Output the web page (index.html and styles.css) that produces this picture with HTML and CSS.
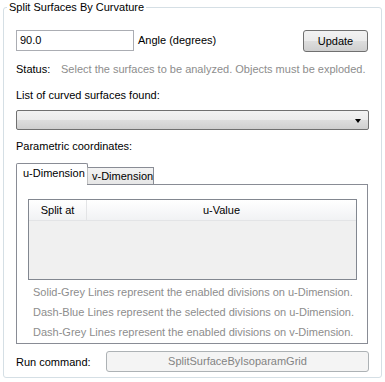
FILE: index.html
```html
<!DOCTYPE html>
<html>
<head>
<meta charset="utf-8">
<link rel="stylesheet" href="styles.css">
</head>
<body>
<fieldset class="group">
  <legend class="group-title">Split Surfaces By Curvature</legend>
  <div class="group-body">
    <div class="angle-row">
      <div class="text-input">90.0</div>
      <span class="angle-label">Angle (degrees)</span>
      <div class="btn update-btn">Update</div>
    </div>
    <div class="status-row">
      <span class="status-label">Status:</span>
      <span class="muted">Select the surfaces to be analyzed. Objects must be exploded.</span>
    </div>
    <div class="label-row list-label">List of curved surfaces found:</div>
    <div class="combo"><span class="combo-arrow"></span></div>
    <div class="label-row param-label">Parametric coordinates:</div>
    <div class="tabs">
      <div class="tab-strip">
        <div class="tab tab-active">u-Dimension</div>
        <div class="tab tab-inactive">v-Dimension</div>
      </div>
      <div class="tab-panel">
        <div class="grid">
          <div class="grid-head">
            <div class="col-split">Split at</div>
            <div class="col-value">u-Value</div>
          </div>
          <div class="grid-body"></div>
        </div>
        <div class="notes">
          <div class="note">Solid-Grey Lines represent the enabled divisions on u-Dimension.</div>
          <div class="note">Dash-Blue Lines represent the selected divisions on u-Dimension.</div>
          <div class="note">Dash-Grey Lines represent the enabled divisions on v-Dimension.</div>
        </div>
      </div>
    </div>
    <div class="run-row">
      <span class="run-label">Run command:</span>
      <div class="run-btn">SplitSurfaceByIsoparamGrid</div>
    </div>
  </div>
</fieldset>
</body>
</html>
```

FILE: styles.css
```css
* { box-sizing: border-box; }
html, body {
  margin: 0;
  padding: 0;
  background: #ffffff;
}
body {
  width: 385px;
  height: 382px;
  overflow: hidden;
  font-family: "Liberation Sans", Arial, sans-serif;
  font-size: 11px;
  color: #000000;
}
.group {
  margin: 0 3px;
  padding: 0;
  border: 1px solid #d5dfe5;
  border-radius: 3px;
  min-width: 0;
}
.group-title {
  margin-left: 3px;
  padding: 0 2px;
  height: 14px;
  line-height: 14px;
  font-size: 11px;
}
.group-body {
  padding: 16px 12px 5px 12px;
  display: flex;
  flex-direction: column;
}
.angle-row {
  display: flex;
  align-items: flex-start;
  height: 22px;
}
.text-input {
  width: 118px;
  height: 21px;
  border: 1px solid #abadb3;
  padding: 0 0 0 3px;
  line-height: 19px;
  background: #fff;
}
.angle-label {
  margin-left: 4px;
  line-height: 21px;
}
.btn {
  border: 1px solid #707070;
  border-radius: 3px;
  background: linear-gradient(#f2f2f2 0%, #ebebeb 50%, #dddddd 51%, #cfcfcf 100%);
  text-align: center;
}
.update-btn {
  margin-left: auto;
  margin-right: 1px;
  width: 65px;
  height: 22px;
  line-height: 20px;
}
.status-row {
  margin-top: 10px;
  height: 14px;
  line-height: 14px;
  display: flex;
  white-space: nowrap;
}
.status-label {
  width: 45px;
}
.muted {
  color: #8d8d8d;
}
.label-row {
  height: 14px;
  line-height: 14px;
}
.list-label {
  margin-top: 12px;
}
.combo {
  margin-top: 8px;
  height: 20px;
  border: 1px solid #707070;
  border-radius: 2px;
  background: linear-gradient(#f2f2f2 0%, #ebebeb 50%, #dddddd 51%, #cfcfcf 100%);
  position: relative;
}
.combo-arrow {
  position: absolute;
  right: 7px;
  top: 8px;
  width: 0;
  height: 0;
  border-left: 3.5px solid transparent;
  border-right: 3.5px solid transparent;
  border-top: 4px solid #000;
}
.param-label {
  margin-top: 9px;
}
.tabs {
  margin-top: 10px;
  display: flex;
  flex-direction: column;
}
.tab-strip {
  display: flex;
  align-items: flex-end;
  height: 21px;
  position: relative;
  z-index: 1;
}
.tab {
  border: 1px solid #898c95;
  border-bottom: none;
  white-space: nowrap;
  flex: none;
}
.tab-active {
  height: 22px;
  width: 72px;
  background: #ffffff;
  line-height: 19px;
  padding-left: 6px;
  margin-bottom: -1px;
  border-radius: 2px 2px 0 0;
}
.tab-inactive {
  height: 17px;
  width: 67px;
  margin-left: -1px;
  padding-left: 4px;
  background: linear-gradient(#f3f3f3, #e6e6e6);
  line-height: 17px;
  border-left-color: #c0c0c0;
}
.tab-panel {
  width: 352px;
  height: 160px;
  border: 1px solid #898c95;
  background: #ffffff;
  padding: 14px 10px 0 11px;
}
.grid {
  height: 81px;
  border: 1px solid #828790;
  display: flex;
  flex-direction: column;
  background: #f0f0f0;
}
.grid-head {
  display: flex;
  height: 21px;
  background: linear-gradient(#ffffff, #f1f2f4);
  border-bottom: 1px solid #e3e4e6;
  line-height: 20px;
}
.col-split {
  width: 58px;
  text-align: center;
  border-right: 1px solid #e3e4e6;
}
.col-value {
  flex: 1;
  text-align: center;
}
.grid-body {
  flex: 1;
}
.notes {
  margin-top: 2px;
  padding-left: 5px;
  color: #8d8d8d;
  white-space: nowrap;
}
.note {
  height: 20px;
  line-height: 20px;
}
.run-row {
  margin-top: 7px;
  display: flex;
  align-items: center;
  height: 21px;
}
.run-label {
  width: 90px;
}
.run-btn {
  margin-left: auto;
  width: 263px;
  height: 21px;
  border: 1px solid #adb2b5;
  border-radius: 3px;
  background: #f4f4f4;
  color: #838383;
  text-align: center;
  line-height: 19px;
}
```
